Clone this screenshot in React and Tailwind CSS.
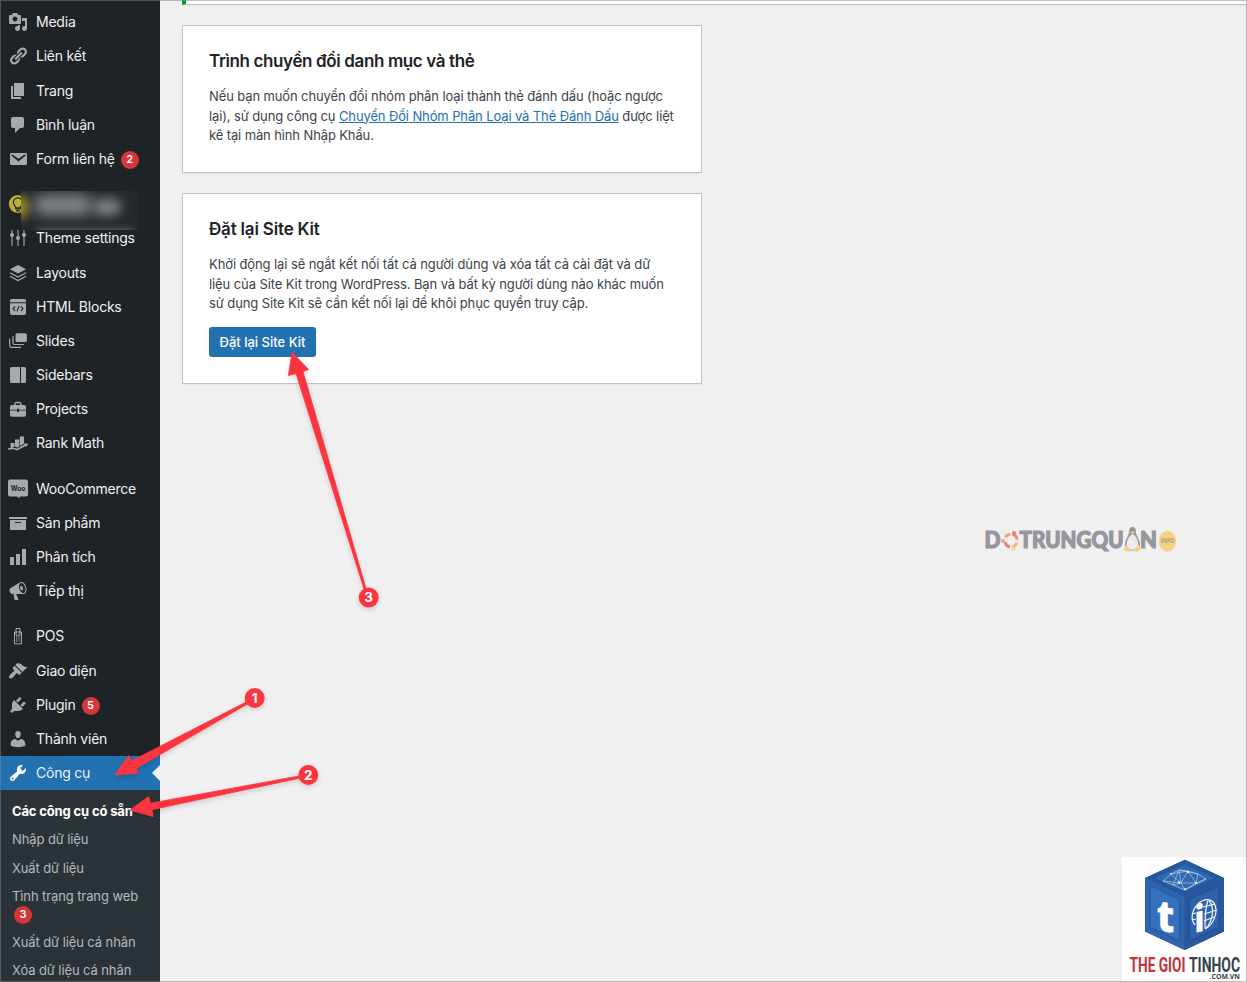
import React from 'react';

const icons = {
  media: 'M13 11V4c0-.55-.45-1-1-1h-1.67L9 1H5L3.67 3H2c-.55 0-1 .45-1 1v7c0 .55.45 1 1 1h10c.55 0 1-.45 1-1zM7 4.5c1.38 0 2.5 1.12 2.5 2.5S8.38 9.5 7 9.5 4.5 8.38 4.5 7 5.62 4.5 7 4.5zM14 6h5v10.5c0 1.38-1.12 2.5-2.5 2.5S14 17.88 14 16.5s1.12-2.5 2.5-2.5c.17 0 .34.02.5.05V9h-3V6zm-4 8.05V13h2v3.5c0 1.38-1.12 2.5-2.5 2.5S7 17.88 7 16.5 8.12 14 9.5 14c.17 0 .34.02.5.05z',
  links: 'M17.74 2.76c1.68 1.69 1.68 4.41 0 6.1l-1.53 1.52c-1.12 1.12-2.7 1.47-4.14 1.09l2.62-2.61.76-.77.76-.76c.84-.84.84-2.2 0-3.04-.84-.85-2.2-.85-3.04 0l-.77.76-3.38 3.38c-.37-1.44-.02-3.02 1.1-4.14l1.52-1.53c1.69-1.68 4.42-1.68 6.1 0zM8.59 13.43l5.34-5.34c.42-.42.42-1.1 0-1.52-.44-.43-1.13-.39-1.53 0l-5.33 5.34c-.42.42-.42 1.1 0 1.52.44.43 1.13.39 1.52 0zm-.76 2.29l4.14-4.15c.38 1.44.03 3.02-1.09 4.14l-1.52 1.53c-1.69 1.68-4.41 1.68-6.1 0-1.68-1.68-1.68-4.42 0-6.1l1.53-1.52c1.12-1.12 2.7-1.47 4.14-1.1l-4.14 4.15c-.85.84-.85 2.2 0 3.05.84.84 2.2.84 3.04 0z',
  page: 'M6 15V2h10v13H6zm-1 1h8v2H3V5h2v11z',
  comment: 'M5 2h9c1.1 0 2 .9 2 2v7c0 1.1-.9 2-2 2h-2l-5 5v-5H5c-1.1 0-2-.9-2-2V4c0-1.1.9-2 2-2z',
  email: 'M3.87 4h13.25C18.37 4 19 4.59 19 5.79v8.42c0 1.19-.63 1.79-1.88 1.79H3.87c-1.25 0-1.88-.6-1.88-1.79V5.79c0-1.2.63-1.79 1.88-1.79zm6.62 8.6l6.74-5.53c.24-.2.43-.66.13-1.07-.29-.41-.82-.42-1.17-.17l-5.7 3.86L4.8 5.83c-.35-.25-.88-.24-1.17.17-.3.41-.11.87.13 1.07z',
  archive: 'M19 4v2H1V4h18zM2 7h16v10H2V7zm11 3V9H7v1h6z',
  chart: 'M18 18V2h-4v16h4zm-6 0V7H8v11h4zm-6 0v-8H2v8h4z',
  megaphone: 'M18.15 5.94c.46 1.62.38 3.22-.02 4.48-.42 1.28-1.26 2.18-2.3 2.48-.16.06-.26.06-.4.06-.06.02-.12.02-.18.02-.06.02-.14.02-.22.02h-6.8l2.22 5.5c.02.14-.06.26-.14.34-.08.1-.24.16-.34.16H6.95c-.1 0-.26-.06-.34-.16-.08-.08-.16-.2-.14-.34l-1-5.5H4.25l-.02-.02c-.5.06-1.08-.18-1.54-.62s-.88-1.08-1.06-1.88c-.24-.8-.2-1.56-.02-2.2.18-.62.58-1.08 1.06-1.3l.02-.02 9-5.4c.1-.06.18-.1.24-.16.06-.04.14-.08.24-.12.16-.08.28-.12.5-.18 1.04-.3 2.24.1 3.22.98s1.84 2.24 2.26 3.86zm-2.58 5.98h-.02c.4-.1.74-.34 1.04-.7.58-.7.86-1.76.86-3.04 0-.64-.1-1.3-.28-1.98-.34-1.36-1.02-2.5-1.78-3.24s-1.68-1.1-2.46-.88c-.82.22-1.4.96-1.7 2-.32 1.04-.28 2.36.06 3.72.38 1.36 1 2.5 1.8 3.24.78.74 1.62 1.1 2.48.88zm-2.54-7.08c.22-.04.42-.02.62.04.38.16.76.48 1.02 1s.42 1.2.42 1.78c0 .3-.04.56-.12.8-.18.48-.44.84-.86.94-.34.1-.8-.06-1.14-.4s-.64-.86-.78-1.5c-.18-.62-.12-1.24.02-1.72s.48-.84.82-.94z',
  appearance: 'M14.48 11.06L7.41 3.99l1.5-1.5c.5-.56 2.3-.47 3.51.32 1.21.8 1.43 1.28 2.91 2.1 1.18.64 2.45 1.26 4.45.85zm-.71.71L6.7 4.7 4.93 6.47c-.39.39-.39 1.02 0 1.41l1.06 1.06c.39.39.39 1.03 0 1.42-.6.6-1.43 1.11-2.21 1.69-.35.26-.7.53-1.01.84C1.43 14.23.4 16.08 1.4 17.07c.99 1 2.84-.03 4.18-1.36.31-.31.58-.66.85-1.02.57-.78 1.08-1.61 1.69-2.21.39-.39 1.02-.39 1.41 0l1.06 1.06c.39.39 1.02.39 1.41 0z',
  plugins: 'M13.11 4.36L9.87 7.6 8 5.73l3.24-3.24c.35-.34 1.05-.2 1.56.32.52.51.66 1.21.31 1.55zm-8 1.77l.91-1.12 9.01 9.01-1.19.84c-.71.71-2.63 1.16-3.82 1.16H6.14L4.9 17.26c-.59.59-1.54.59-2.12 0-.59-.58-.59-1.53 0-2.12l1.24-1.24v-3.88c0-1.13.4-3.19 1.09-3.89zm7.26 3.97l3.24-3.24c.34-.35 1.04-.21 1.55.31.52.51.66 1.21.31 1.55l-3.24 3.25z',
  users: 'M10 9.25c-2.27 0-2.73-3.44-2.73-3.44C7 4.02 7.82 2 9.97 2c2.16 0 2.98 2.02 2.71 3.81 0 0-.41 3.44-2.68 3.44zm0 2.57L12.72 10c2.39 0 4.52 2.33 4.52 4.53v2.49s-3.65 1.13-7.24 1.13c-3.65 0-7.24-1.13-7.24-1.13v-2.49c0-2.25 1.94-4.48 4.47-4.48z',
  tools: 'M16.68 9.77c-1.34 1.34-3.3 1.67-4.95.99l-5.41 6.52c-.99.99-2.59.99-3.58 0s-.99-2.59 0-3.57l6.52-5.42c-.68-1.65-.35-3.61.99-4.95 1.28-1.28 3.12-1.62 4.72-1.06l-2.89 2.89 2.82 2.82 2.86-2.87c.53 1.58.18 3.39-1.08 4.65zM3.81 16.21c.4.39 1.04.39 1.43 0 .4-.4.4-1.04 0-1.43-.39-.4-1.03-.4-1.43 0-.39.39-.39 1.03 0 1.43z',
  rank: 'M2.500 10h4v3.500l-4 1.700zM7 6.500h4.200v7.200L9 14.500l-2-1zM11.800 3.500H16v7.200l-4.200 2.400zM.2 15.200l5-.8 3.600 1.300 7.700-4.100-.5-1 4.200.2-2 3.200-.6-1-8.600 4.500-3.800-1.400-4.700 1z',
};

// icons built from more than one shape
const drawn = {
  bulb: (
    <>
      <circle cx="9.800" cy="10" r="9" fill="#bdb035" />
      <path d="M7.600 13.800c0-2-2.200-2.800-2.200-5.300a4.600 4.600 0 0 1 9.200 0c0 2.500-2.200 3.300-2.200 5.300z" fill="none" stroke="#1d2327" strokeWidth="1.200" />
      <path d="M7.300 14.300h5.400v1.300H7.300zM8 16.200h4v1.300H8z" fill="#1d2327" />
    </>
  ),
  sliders: (
    <>
      <path d="M4 2v16M10 2v16M16 2v16" stroke="currentColor" strokeWidth="1.100" />
      <circle cx="4" cy="7" r="2" /><circle cx="10" cy="10" r="2" /><circle cx="16" cy="7" r="2" />
    </>
  ),
  layers: (
    <>
      <path d="M10 2 18 6.300 10 10.500 2 6.300z" />
      <path d="M2 9.800 10 14l8-4.200M2 13.300l8 4.200 8-4.200" fill="none" stroke="currentColor" strokeWidth="1.200" />
    </>
  ),
  html: (
    <>
      <path d="M2 5.200V4a2 2 0 0 1 2-2h12a2 2 0 0 1 2 2v1.200zM2 6.300h16V16a2 2 0 0 1-2 2H4a2 2 0 0 1-2-2z" />
      <path d="m7.200 9.500-2.200 2.200 2.200 2.200M12.800 9.500l2.200 2.200-2.200 2.200M11 9l-2 5.400" fill="none" stroke="#1d2327" strokeWidth="1.100" />
    </>
  ),
  slides: (
    <>
      <rect x="7.500" y="2.300" width="11.400" height="8.800" rx="1.700" />
      <path d="M5 5v7a1.500 1.500 0 0 0 1.500 1.500H16M1.700 7.500v7.200A1.500 1.500 0 0 0 3.200 16.300H13" fill="none" stroke="currentColor" strokeWidth="1.200" />
    </>
  ),
  sidebars: (
    <>
      <path d="M3.500 2H12v16H3.500A1.500 1.500 0 0 1 2 16.500v-13A1.500 1.500 0 0 1 3.500 2z" />
      <path d="M13 2h3.500A1.500 1.500 0 0 1 18 3.500v13a1.500 1.500 0 0 1-1.500 1.500H13z" />
    </>
  ),
  briefcase: (
    <>
      <path d="M6.800 6.500c0-1.700.8-3 2-3h2.400c1.200 0 2 1.300 2 3" fill="none" stroke="currentColor" strokeWidth="1.300" />
      <path d="M4 6h12a2 2 0 0 1 2 2v2.700h-7V9.800H9v.9H2V8a2 2 0 0 1 2-2zM2 11.600h7v1.300h2v-1.300h7V16a1.700 1.700 0 0 1-1.700 1.700H3.700A1.700 1.700 0 0 1 2 16z" />
    </>
  ),
  woo: (
    <>
      <path d="M2 .4h16a2 2 0 0 1 2 2v13.200a2 2 0 0 1-2 2h-6.200L11.300 19.500l-2-1.900H2a2 2 0 0 1-2-2V2.400a2 2 0 0 1 2-2z" />
      <text x="2.800" y="11.500" fontSize="7" fontWeight="700" fill="#1d2327" textLength="14.500" lengthAdjust="spacingAndGlyphs">Woo</text>
    </>
  ),
  pos: (
    <>
      <path d="M8 6.500V2.500h4v4M6.500 6h7v11.800h-7zM8 6v3.200h4V6" fill="none" stroke="currentColor" strokeWidth="1" />
      <path d="M8 10.500h1v1H8zm1.600 0h1v1h-1zm1.600 0h1v1h-1zM8 12.500h1v1H8zm1.600 0h1v1h-1zm1.600 0h1v1h-1zM8 14.500h1v1H8zm1.600 0h1v1h-1zm1.600 0h1v1h-1z" />
    </>
  ),
};

const groups = [
  [
    { label: 'Media', icon: 'media' },
    { label: 'Liên kết', icon: 'links' },
    { label: 'Trang', icon: 'page' },
    { label: 'Bình luận', icon: 'comment' },
    { label: 'Form liên hệ', icon: 'email', count: 2 },
  ],
  [
    { icon: 'bulb', hidden: true },
    { label: 'Theme settings', icon: 'sliders' },
    { label: 'Layouts', icon: 'layers' },
    { label: 'HTML Blocks', icon: 'html' },
    { label: 'Slides', icon: 'slides' },
    { label: 'Sidebars', icon: 'sidebars' },
    { label: 'Projects', icon: 'briefcase' },
    { label: 'Rank Math', icon: 'rank' },
  ],
  [
    { label: 'WooCommerce', icon: 'woo' },
    { label: 'Sản phẩm', icon: 'archive' },
    { label: 'Phân tích', icon: 'chart' },
    { label: 'Tiếp thị', icon: 'megaphone' },
  ],
  [
    { label: 'POS', icon: 'pos' },
    { label: 'Giao diện', icon: 'appearance' },
    { label: 'Plugin', icon: 'plugins', count: 5 },
    { label: 'Thành viên', icon: 'users' },
    { label: 'Công cụ', icon: 'tools', active: true },
  ],
];

const submenu = [
  { label: 'Các công cụ có sẵn', active: true },
  { label: 'Nhập dữ liệu' },
  { label: 'Xuất dữ liệu' },
  { label: 'Tình trạng trang web', count: 3 },
  { label: 'Xuất dữ liệu cá nhân' },
  { label: 'Xóa dữ liệu cá nhân' },
];

function Icon({ name }) {
  return (
    <svg viewBox="0 0 20 20" className="w-5 h-5 shrink-0 overflow-visible" fill="currentColor">
      {icons[name] ? <path fillRule="evenodd" d={icons[name]} /> : drawn[name]}
    </svg>
  );
}

function Count({ children }) {
  return (
    <span className="flex w-[18px] h-[18px] items-center justify-center rounded-full bg-[#d63638] text-[11px] font-semibold leading-none tracking-normal text-white">
      {children}
    </span>
  );
}

function MenuItem({ item }) {
  return (
    <a className={item.active
      ? 'relative flex h-[34.2px] items-center gap-2 pl-2 bg-[#2271b1] text-white'
      : 'relative flex h-[34.2px] items-center gap-2 pl-2 text-[#a7aaad]'}>
      <Icon name={item.icon} />
      {item.hidden ? (
        <span className="absolute left-[21px] top-[4px] z-10 h-[39px] w-[117px] overflow-hidden bg-[#24292c]">
          <span className="absolute -left-3 top-1 h-6 w-5 rounded-full bg-[#8f8727] blur-[5px]"></span>
          <span className="absolute left-3 top-1 h-5 w-[60px] rounded-full bg-[#85888a] blur-[7px]"></span>
          <span className="absolute left-[72px] top-2 h-[16px] w-7 rounded-full bg-[#85888a] blur-[6px]"></span>
          <span className="absolute left-4 top-[38px] h-2 w-24 bg-[#626568] blur-[3px]"></span>
        </span>
      ) : (
        <span className="whitespace-nowrap text-[14px] leading-[18px] tracking-[-0.22px] text-[#f0f0f1]">{item.label}</span>
      )}
      {item.count && <span className="-ml-[2px] mt-[2px]"><Count>{item.count}</Count></span>}
      {item.active && <span className="absolute right-0 top-[9px] border-y-8 border-r-8 border-y-transparent border-r-[#f0f0f1]"></span>}
    </a>
  );
}

function Sidebar() {
  return (
    <nav className="flex h-full w-40 shrink-0 flex-col bg-[#1d2327] pt-[5.1px]">
      <div className="flex flex-col gap-[11px]">
        {groups.map((group, i) => (
          <div key={i}>
            {group.map((item) => <MenuItem key={item.icon} item={item} />)}
          </div>
        ))}
      </div>
      <ul className="flex-1 bg-[#2c3338] pt-[6.8px]">
        {submenu.map((item) => (
          <li key={item.label} className={item.active
            ? 'px-3 py-[5px] text-[13px] leading-[18.4px] whitespace-nowrap font-bold tracking-[-0.15px] text-white'
            : 'px-3 py-[5px] text-[13px] leading-[18.4px] whitespace-nowrap tracking-[-0.1px] text-[#b4b9be]'}>
            {item.label}
            {item.count && <div className="pl-[2px] h-[17.2px]"><Count>{item.count}</Count></div>}
          </li>
        ))}
      </ul>
    </nav>
  );
}

function Card({ children }) {
  return (
    <section className="w-[520px] border border-[#c3c4c7] bg-white px-[26px] shadow-[0_1px_1px_rgba(0,0,0,0.04)]">
      {children}
    </section>
  );
}

function Arrow({ points, cx, cy, n }) {
  return (
    <g>
      <g filter="url(#arrow-shadow)" fill="#fb3640">
        <polygon points={points} stroke="#fb3640" strokeWidth="0.800" strokeLinejoin="round" />
        <circle cx={cx} cy={cy} r="10" />
      </g>
      <text x={cx} y={cy + 4.8} textAnchor="middle" fontSize="13.500" fontWeight="700" fill="#fff">{n}</text>
    </g>
  );
}

function Annotations() {
  return (
    <svg className="absolute inset-0 z-20 pointer-events-none" width="1247" height="982">
      <defs>
        <filter id="arrow-shadow" x="-20%" y="-20%" width="140%" height="140%">
          <feDropShadow dx="0" dy="2" stdDeviation="2.500" floodColor="#000" floodOpacity="0.160" />
        </filter>
      </defs>
      <Arrow n="1" cx={254.7} cy={698} points="115,775 128.500,755.500 131.500,761 246.500,701.800 247.500,704 136,768.500 138.500,773" />
      <Arrow n="2" cx={308.3} cy={775} points="130,810 148.700,796.500 150.500,803.200 299,776 299.300,778.300 152,809.700 153,816.500" />
      <Arrow n="3" cx={368.7} cy={597.5} points="292,352 308.500,369.500 303,371.500 366,588.500 364,589 296,373.500 288.500,375.500" />
    </svg>
  );
}

function Watermark() {
  return (
    <svg className="absolute left-[980px] top-[522px]" width="200" height="36" viewBox="980 522 200 36">
      <g fontFamily="Lato, sans-serif" fontWeight="900" fontSize="22" fill="#96969f" stroke="#96969f" strokeWidth="1.200">
        <text x="984.500" y="548" textLength="16" lengthAdjust="spacingAndGlyphs">D</text>
        <text x="1019.500" y="548" textLength="104" lengthAdjust="spacingAndGlyphs">TRUNGQU</text>
        <text x="1140" y="548" textLength="17" lengthAdjust="spacingAndGlyphs">N</text>
      </g>
      <g fill="none" strokeWidth="3">
        <path d="M1005.500 537.500a6 6 0 0 1 5-3.500" stroke="#f3a67b" />
        <path d="M1012.500 534.200a6 6 0 0 1 4.500 5.500" stroke="#ee8c80" />
        <path d="M1016.800 542.500a6 6 0 0 1-5 4.500" stroke="#f5b878" />
        <path d="M1010 547a6 6 0 0 1-4.800-5" stroke="#ec7f75" />
      </g>
      <circle cx="1003" cy="541" r="2" fill="#f3a67b" />
      <circle cx="1014" cy="533" r="2" fill="#ec7f75" />
      <circle cx="1013.500" cy="549" r="2" fill="#f6cf8b" />
      <path d="M1132.500 527c2.300 0 3.400 2 3.400 4.500 0 4 4 7.500 4 13 0 3-2 6-4 6h-6.800c-2 0-4-3-4-6 0-5.500 4-9 4-13 0-2.500 1.100-4.500 3.400-4.500z" fill="#97989d" />
      <path d="M1132.500 534c3.400 2 5.600 6 5.600 10s-2.200 5.800-5.600 5.800-5.600-1.800-5.600-5.800 2.200-8 5.600-10z" fill="#ececee" />
      <path d="M1130.200 532.200 1132.500 531l2.400 1.200-2.400 2z" fill="#f1c76f" />
      <path d="m1126.500 544.500 4 5.300c.5 1.800-1.500 2.400-3 1.700l-3.800-1.500zM1138.500 544.500l-4 5.300c-.5 1.800 1.500 2.400 3 1.700l3.600-2z" fill="#f5d27c" />
      <ellipse cx="1167.500" cy="541.200" rx="8.700" ry="10.500" fill="#f4d286" />
      <text x="1160.700" y="543.300" fontFamily="Open Sans, sans-serif" fontWeight="700" fontSize="6.300" fill="#a79e85" textLength="13.600" lengthAdjust="spacingAndGlyphs">INFO</text>
    </svg>
  );
}

function SiteLogo() {
  return (
    <svg className="absolute left-[1122px] top-[857px] bg-[#fdfdfd]" width="125" height="125" viewBox="1122 857 125 125">
      <path d="M1185 859.700 1224 878v53.500L1185 950l-40-18.500V878z" fill="#2b5fa8" />
      <path d="M1185 859.700 1224 878l-39.500 18.500L1145 878z" fill="#2658a0" />
      <path d="m1185 864.500 29 13.500-29.500 13-29.500-13z" fill="#2f69b2" />
      <path d="M1145 878l39.500 18.500V950L1145 931.500z" fill="#2e65ad" />
      <path d="M1150 885.500l29.500 14v41.500L1150 927z" fill="#3470bd" stroke="#28569a" strokeWidth="1" />
      <path d="M1224 878l-39.500 18.500V950l39.500-18.500z" fill="#28579d" />
      <path d="M1219 885.500l-29.500 14v41.500L1219 927z" fill="#2d63ac" stroke="#234d8d" strokeWidth="1" />
      <g fill="none" stroke="#c9daf0" strokeWidth="0.600">
        <path d="m1163 881 8-7 8-4 9 1 10 3 8 5-10 5-11 6-12-5zM1171 874l10 9 7-12 8 12 10-4M1163 881l18 2 15 0-11 7-4-7-8 2 6-15 19 4-2 9" />
        <path d="m1179 870 2 13M1188 871l-17 3" />
      </g>
      <g fill="#e8f0fa">
        <circle cx="1179" cy="882.500" r="1.200" /><circle cx="1188" cy="872" r="1.200" /><circle cx="1171" cy="874" r="1" /><circle cx="1196" cy="883" r="1.100" /><circle cx="1185" cy="889" r="1" />
      </g>
      <text transform="translate(1156.500 930) skewY(10)" fontFamily="Open Sans, sans-serif" fontWeight="800" fontSize="44" fill="#fff" textLength="18" lengthAdjust="spacingAndGlyphs">t</text>
      <g fill="none" stroke="#f3f7fc" strokeWidth="1.200">
        <path d="M1195 925c-5-6-3-15 3-21 6-6 14-6 17 1 3 9-2 20-10 24" />
        <path d="M1209 900.500c6 7 4 20-3 28M1208 900.500c-3 7-3 18-3 28M1203 907l12-3M1204 914l13-4M1204 921l10-4M1192 914l4-1M1192 920l4-1" />
      </g>
      <text transform="translate(1194.500 933) skewY(-12)" fontFamily="Open Sans, sans-serif" fontWeight="800" fontSize="37" fill="#fff" textLength="10" lengthAdjust="spacingAndGlyphs">i</text>
      <g fontFamily="Roboto, sans-serif" fontWeight="700" fontSize="21">
        <text x="1129.500" y="971.700" fill="#c1343b" textLength="56" lengthAdjust="spacingAndGlyphs">THE GIOI</text>
        <text x="1189" y="971.700" fill="#34434d" textLength="51" lengthAdjust="spacingAndGlyphs">TINHOC</text>
      </g>
      <text x="1209.500" y="979.300" fontFamily="Open Sans, sans-serif" fontWeight="700" fontSize="6.200" fill="#34434d" textLength="30.500" lengthAdjust="spacingAndGlyphs">.COM.VN</text>
    </svg>
  );
}

export default function App() {
  return (
    <div className="relative flex h-[982px] w-[1247px] overflow-hidden bg-[#f0f0f1] font-['Inter','Noto_Sans',sans-serif]">
      <Sidebar />

      <main className="flex flex-1 flex-col pl-[22px]">
        <div className="h-[5px] border-b border-l-4 border-b-[#c3c4c7] border-l-[#00a32a] bg-white shadow-[0_1px_1px_rgba(0,0,0,0.04)]"></div>

        <div className="mt-5 flex flex-col gap-5">
          <Card>
            <h2 className="pt-[23px] text-[17px] font-semibold leading-6 tracking-[-0.37px] text-[#1d2327]">Trình chuyển đổi danh mục và thẻ</h2>
            <p className="mt-[14px] h-[85px] whitespace-nowrap text-[13px] leading-[19.5px] tracking-[-0.12px] text-[#3c434a]">
              Nếu bạn muốn chuyển đổi nhóm phân loại thành thẻ đánh dấu (hoặc ngược<br />
              lại), sử dụng công cụ <a className="text-[#2271b1] underline">Chuyển Đổi Nhóm Phân Loại và Thẻ Đánh Dấu</a> được liệt<br />
              kê tại màn hình Nhập Khẩu.
            </p>
          </Card>

          <Card>
            <h2 className="pt-[23px] text-[17px] font-semibold leading-6 tracking-[-0.18px] text-[#1d2327]">Đặt lại Site Kit</h2>
            <p className="mt-[14px] whitespace-nowrap text-[13px] leading-[19.5px] tracking-[-0.1px] text-[#3c434a]">
              Khởi động lại sẽ ngắt kết nối tất cả người dùng và xóa tất cả cài đặt và dữ<br />
              liệu của Site Kit trong WordPress. Bạn và bất kỳ người dùng nào khác muốn<br />
              sử dụng Site Kit sẽ cần kết nối lại để khôi phục quyền truy cập.
            </p>
            <button className="mb-[26px] mt-[13.5px] block h-[30px] w-[107px] rounded-[3px] bg-[#2271b1] text-center text-[13px] font-medium leading-[30px] text-white">
              Đặt lại Site Kit
            </button>
          </Card>
        </div>
      </main>

      <Watermark />
      <SiteLogo />
      <Annotations />
      <div className="absolute inset-0 z-30 border border-[#808080]/50 pointer-events-none"></div>
    </div>
  );
}
